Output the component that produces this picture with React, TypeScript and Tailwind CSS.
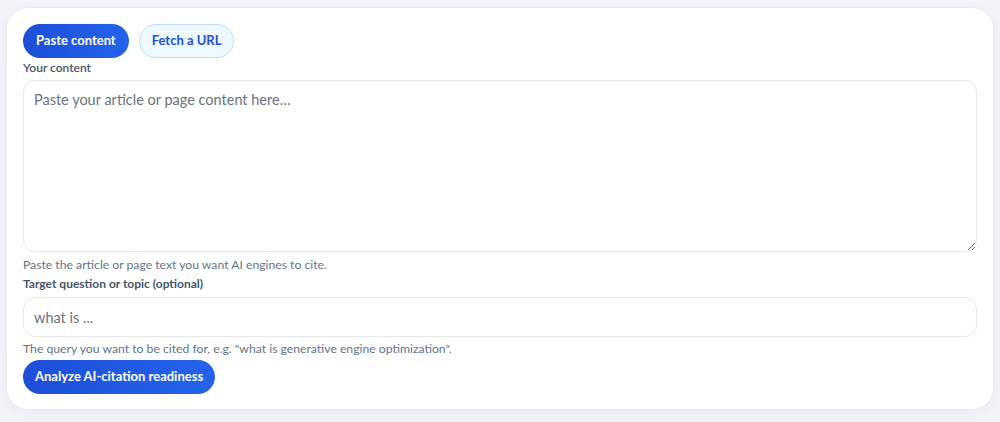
export default function App() {
  return (
    <div className="min-h-screen bg-[#f3f4f8] px-[6px] pt-[7px] font-['Lato',sans-serif]">
      <div className="rounded-[22px] border border-[#e8eaef] bg-white px-4 pt-[16px] pb-[15px] shadow-[0_4px_16px_rgba(15,23,42,0.04)]">
        <div className="flex gap-[10px]">
          <button className="h-[34px] rounded-full bg-gradient-to-r from-[#1d4ed8] to-[#2563eb] px-[13px] text-[13px] font-bold text-white">
            Paste content
          </button>
          <button className="h-[34px] rounded-full border border-[#bfdbfe] bg-[#eef9ff] px-[12px] text-[13px] font-bold text-[#1d4ed8]">
            Fetch a URL
          </button>
        </div>
        <label className="block text-[12px] leading-[20px] font-semibold text-[#475569]">Your content</label>
        <textarea
          className="mt-[2px] block h-[172px] w-full resize-y rounded-[12px] border border-[#e6e8ec] px-[10px] py-[8px] text-[14.5px] text-[#1f2937] placeholder:text-[#6b7280] outline-none"
          placeholder="Paste your article or page content here…"
        />
        <p className="mt-[4px] text-[12.2px] leading-[18px] text-[#64748b]">Paste the article or page text you want AI engines to cite.</p>
        <label className="mt-[1px] block text-[12px] leading-[18px] font-bold text-[#475569]">Target question or topic (optional)</label>
        <input
          className="mt-[4px] block h-[40px] w-full rounded-[12px] border border-[#e6e8ec] px-[10px] text-[14.5px] text-[#1f2937] placeholder:text-[#6b7280] outline-none"
          placeholder="what is ..."
        />
        <p className="mt-[3px] text-[12.2px] leading-[18px] text-[#64748b]">
          The query you want to be cited for, e.g. "what is generative engine optimization".
        </p>
        <button className="mt-[2px] h-[34px] rounded-full bg-gradient-to-r from-[#1d4ed8] to-[#2563eb] px-[12px] text-[13px] font-bold text-white">
          Analyze AI-citation readiness
        </button>
      </div>
    </div>
  )
}
